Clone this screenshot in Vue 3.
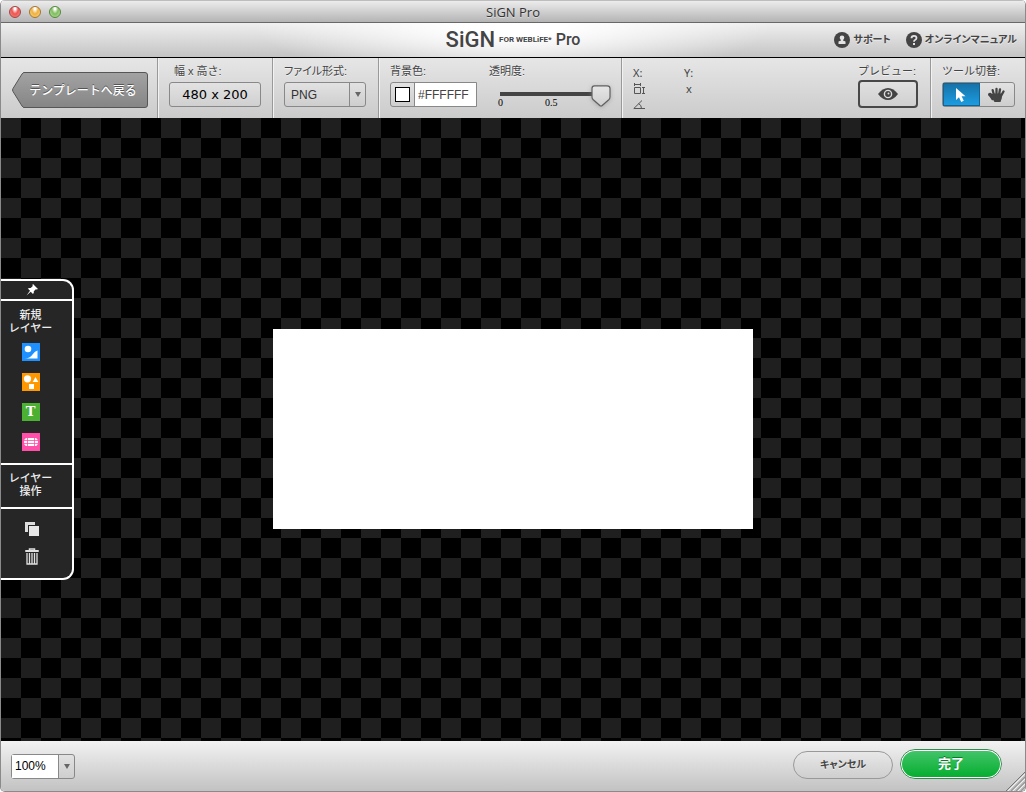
<script setup>
import { ref, computed } from 'vue'

const format = ref('PNG')
const color = ref('#FFFFFF')
const opacity = ref(1)
const zoom = ref('100%')
const tool = ref('select')
const knobLeft = computed(() => `calc(${opacity.value} * (100% - 20px))`)
</script>

<template>
  <div class="window">
    <header class="titlebar">
      <div class="lights">
        <button class="light red" aria-label="Close"></button>
        <button class="light yellow" aria-label="Minimize"></button>
        <button class="light green" aria-label="Zoom"></button>
      </div>
      <h1 class="title">SiGN Pro</h1>
    </header>

    <div class="brandbar">
      <div class="brand">
        <span class="brand-main">SiGN</span>
        <span class="brand-sub">FOR WEBLiFE*</span>
        <span class="brand-pro">Pro</span>
      </div>
      <nav class="links">
        <a href="#support">
          <svg width="16" height="16" viewBox="0 0 16 16"><circle cx="8" cy="8" r="8" fill="#444" /><circle cx="8" cy="5.800" r="2.300" fill="#e4e4e4" /><path d="M7 7h2v1.500l2.500 1V12H4.500V9.500L7 8.500z" fill="#e4e4e4" /></svg>
          <span>サポート</span>
        </a>
        <a href="#manual">
          <svg width="16" height="16" viewBox="0 0 16 16"><circle cx="8" cy="8" r="8" fill="#444" /><path d="M5.500 6.200Q5.500 3.800 8 3.800T10.500 6Q10.500 7.200 9 8Q8 8.500 8 9.800" fill="none" stroke="#e4e4e4" stroke-width="1.800" /><rect x="7" y="11" width="2" height="2" fill="#e4e4e4" /></svg>
          <span>オンラインマニュアル</span>
        </a>
      </nav>
    </div>

    <div class="toolbar">
      <section class="group group-back">
        <button class="back">
          <svg width="136" height="36" viewBox="0 0 136 36" aria-hidden="true">
            <defs>
              <linearGradient id="backFill" x1="0" y1="0" x2="0" y2="1"><stop offset="0" stop-color="#a3a3a3" /><stop offset="1" stop-color="#858585" /></linearGradient>
            </defs>
            <path d="M12 .5H133Q135.500.5 135.500 3V33Q135.500 35.500 133 35.500H12Q11 35.500 10 34L1 19.500Q0 18 1 16.500L10 2Q11 .5 12 .5Z" fill="url(#backFill)" stroke="#565656" />
          </svg>
          <span>テンプレートへ戻る</span>
        </button>
      </section>

      <section class="group">
        <span class="label indent">幅 x 高さ:</span>
        <button class="size">480 x 200</button>
      </section>

      <section class="group group-format">
        <label class="label" for="format">ファイル形式:</label>
        <div class="picker picker-format">
          <select id="format" v-model="format">
            <option>PNG</option>
            <option>JPEG</option>
            <option>GIF</option>
          </select>
          <span class="arrow"></span>
        </div>
      </section>

      <section class="group pair">
        <div>
          <label class="label" for="color">背景色:</label>
          <div class="colorfield">
            <button class="swatch" aria-label="背景色"><i></i></button>
            <input id="color" v-model="color" type="text">
          </div>
        </div>
        <div>
          <label class="label" for="opacity">透明度:</label>
          <div class="slider">
            <input id="opacity" v-model.number="opacity" type="range" min="0" max="1" step="0.01">
            <svg class="knob" :style="{ left: knobLeft }" width="20" height="22" viewBox="0 0 20 22" aria-hidden="true">
              <defs>
                <linearGradient id="knobFill" x1="0" y1="0" x2="0" y2="1"><stop offset="0" stop-color="#e6e6e6" /><stop offset="1" stop-color="#cfcfcf" /></linearGradient>
              </defs>
              <path d="M3.500 .8H16Q19 .8 19 3.500V12Q19 13.500 18 14.500L11.200 20.500Q10 21.500 8.800 20.500L2 14.500Q1 13.500 1 12V3.500Q1 .8 3.500 .8Z" fill="url(#knobFill)" stroke="#606060" stroke-width="1.200" />
            </svg>
            <div class="ticks"><span>0</span><span>0.5</span></div>
          </div>
        </div>
      </section>

      <section class="group coords">
        <span>X:</span><span>Y:</span>
        <svg width="12" height="12" viewBox="0 0 12 12" fill="none" stroke="#555"><path d="M1.500 4.500h6v6h-6zM1 1.500h7M1.500 0v3M7.500 0v3M9 4.500h3M9 10.500h3M10.500 4.500v6" /></svg>
        <span class="times">x</span>
        <svg width="12" height="10" viewBox="0 0 12 10" fill="none" stroke="#555"><path d="M9 .5L.8 8.500H12" /><path d="M5.500 3.500Q8.500 5 8.500 8.500" /></svg>
      </section>

      <section class="group group-preview">
        <span class="label">プレビュー:</span>
        <button class="preview" aria-label="プレビュー">
          <svg width="20" height="14" viewBox="0 0 20 14"><path d="M0 7Q4.500 1 10 1T20 7Q15.500 13 10 13T0 7Z" fill="#444" /><circle cx="10" cy="7" r="3.600" fill="none" stroke="#ddd" stroke-width="1.400" /><circle cx="10.500" cy="6.500" r="1" fill="#ddd" /></svg>
        </button>
      </section>

      <section class="group group-tools">
        <span class="label">ツール切替:</span>
        <div class="tools">
          <button :class="{ active: tool === 'select' }" aria-label="選択" @click="tool = 'select'">
            <svg width="12" height="16" viewBox="0 0 12 16"><path d="M1 1V13L4 10.200L6.200 15L8.800 13.800L6.600 9.200H10.500Z" fill="#fff" /></svg>
          </button>
          <button :class="{ active: tool === 'hand' }" aria-label="手のひら" @click="tool = 'hand'">
            <svg width="18" height="16" viewBox="0 0 18 16"><path d="M4.500 12Q2.800 9.500 1.200 7.800Q1 6.700 2.200 6.900L5 8.800M6.200 9L4.700 3.200M8.500 8V1.800M11 8L12 2.300M13 9L15.500 4.500" fill="none" stroke="#444" stroke-width="2.300" stroke-linecap="round" stroke-linejoin="round" /><path d="M4 7.800L5.500 6.500L14 6.500Q14.500 11 12.500 15H6.500Q5.500 13 3.500 11Z" fill="#444" /></svg>
          </button>
        </div>
      </section>
    </div>

    <main class="stage">
      <aside class="panel">
        <button class="pin" aria-label="固定">
          <svg width="12" height="12" viewBox="0 0 12 12"><path d="M7 0L12 5L10.800 5.600L9.800 5.200L7.800 7.300Q8.200 9 7 10L4.700 7.700L.5 11.500L4 6.800L1.800 4.600Q3 3.600 4.700 4L6.800 2L6.400 1.100Z" fill="#fff" /></svg>
        </button>
        <section class="new-layer">
          <h2>新規<br>レイヤー</h2>
          <button aria-label="画像">
            <svg width="18" height="18" viewBox="0 0 18 18"><rect width="18" height="18" fill="#1e90ff" /><circle cx="6" cy="6" r="3.300" fill="#fff" /><path d="M2.500 15.500Q8 15.500 10.500 11.500Q13 8 15.500 7.500V15.500Z" fill="#fff" /></svg>
          </button>
          <button aria-label="図形">
            <svg width="18" height="18" viewBox="0 0 18 18"><rect width="18" height="18" fill="#ff9800" /><circle cx="5.500" cy="5.800" r="3.600" fill="#fff" /><path d="M13.500 4L16.300 9H10.700Z" fill="#fff" /><rect x="7" y="11" width="5" height="5" fill="#fff" /></svg>
          </button>
          <button class="text-tool" aria-label="テキスト">T</button>
          <button aria-label="ボタン">
            <svg width="18" height="18" viewBox="0 0 18 18"><rect width="18" height="18" fill="#ff4fa8" /><path d="M4 5H14Q16 6 16 9T14 13H4Q2 12 2 9T4 5Z" fill="#fff" /><path d="M2 7.500H16M2 10.500H16M5.500 5V13M12.500 5V13" stroke="#ff4fa8" stroke-width=".8" /></svg>
          </button>
        </section>
        <section class="layer-title"><h2>レイヤー<br>操作</h2></section>
        <section class="layer-actions">
          <button aria-label="複製">
            <svg width="14" height="14" viewBox="0 0 14 14"><path d="M0 0H10V3H3V10H0Z" fill="#ddd" /><rect x="4" y="4" width="10" height="10" fill="#e6e6e6" /></svg>
          </button>
          <button aria-label="削除">
            <svg width="14" height="17" viewBox="0 0 14 17" fill="none" stroke="#e0e0e0"><path d="M4.500 2V1H9.500V2" stroke-width="1.500" /><path d="M1 3H13" stroke-width="2" stroke-linecap="round" /><path d="M2 5V16H12V5M4.500 5V16M7 5V16M9.500 5V16" stroke-width="1.300" /></svg>
          </button>
        </section>
      </aside>
      <div class="artboard"></div>
    </main>

    <footer class="footer">
      <div class="picker picker-zoom">
        <select v-model="zoom" aria-label="ズーム">
          <option>50%</option>
          <option>100%</option>
          <option>200%</option>
        </select>
        <span class="arrow"></span>
      </div>
      <div class="actions">
        <button class="cancel">キャンセル</button>
        <button class="done">完了</button>
      </div>
      <svg class="grip" width="19" height="19" viewBox="0 0 19 19" aria-hidden="true"><path d="M0 19L19 0V19Z" fill="#c8c8c8" /><path d="M0 19L19 0" stroke="#777" /><path d="M5 19L19 5M10 19L19 10M15 19L19 15" stroke="#969696" stroke-width="1.200" /><path d="M2 19L19 2M7 19L19 7M12 19L19 12" stroke="#f0f0f0" /></svg>
    </footer>
  </div>
</template>

<style>
body {
  background: #fff;
}
</style>

<style scoped>
.window {
  box-sizing: border-box;
  min-height: 100vh;
  display: flex;
  flex-direction: column;
  border: solid #8a8a8a;
  border-width: 0 1px 1px;
  border-radius: 5px;
  overflow: hidden;
  color: #444;
  font: 11px/16px "Liberation Sans", "Noto Sans CJK JP", sans-serif;
}
.window *,
.window *::before {
  box-sizing: border-box;
}
button {
  padding: 0;
  border: 0;
  background: none;
  color: inherit;
  font: inherit;
}
svg {
  display: block;
}
.titlebar {
  display: grid;
  grid-template-columns: 1fr auto 1fr;
  align-items: center;
  height: 23px;
  border-top: 1px solid #bdbdbd;
  border-bottom: 1px solid #686868;
  background: linear-gradient(#ececec, #b4b4b4);
}
.lights {
  display: flex;
  gap: 8px;
  padding-left: 8px;
}
.light {
  width: 12px;
  height: 12px;
  border: 1px solid;
  border-radius: 50%;
}
.red {
  border-color: #a04444;
  background: radial-gradient(ellipse at 50% 15%, #fff 0 10%, #ee5550 45%, #f9908c);
}
.yellow {
  border-color: #a47430;
  background: radial-gradient(ellipse at 50% 15%, #fff 0 10%, #f0b040 45%, #fbe08a);
}
.green {
  border-color: #55853c;
  background: radial-gradient(ellipse at 50% 15%, #fff 0 10%, #80bd60 45%, #c4eca4);
}
.title {
  margin: 0;
  color: #333;
  font: 13px/20px "Open Sans", sans-serif;
  text-shadow: 0 1px #ddd;
}
.brandbar {
  display: grid;
  grid-template-columns: 1fr auto 1fr;
  align-items: center;
  height: 35px;
  border-bottom: 1px solid #000;
  background:
    radial-gradient(ellipse 260px 60px at 50% 0, #fff 20%, rgba(255, 255, 255, 0)),
    linear-gradient(#efefef, #c4c4c4);
}
.brand {
  display: flex;
  grid-column: 2;
  align-items: center;
  gap: 4px;
  font-family: Roboto, sans-serif;
  line-height: 24px;
}
.brand-main {
  font-size: 22px;
  font-weight: 500;
}
.brand-sub {
  font-size: 8px;
  font-weight: 700;
}
.brand-pro {
  font-size: 16px;
  font-weight: 500;
}
.links {
  display: flex;
  justify-content: flex-end;
  gap: 15px;
  padding-right: 8px;
  font-size: 10px;
  font-weight: 700;
  font-feature-settings: "palt";
}
.links a {
  display: flex;
  align-items: center;
  gap: 3px;
  color: #444;
  text-decoration: none;
  text-shadow: 0 1px #eee;
}
.toolbar {
  display: flex;
  height: 60px;
  background: linear-gradient(#e6e6e6, #cbcbcb);
}
.group {
  padding: 5px 11px 0;
  border-right: 1px solid #999;
  box-shadow: 1px 0 #f2f2f2;
}
.label {
  display: block;
  margin-bottom: 3px;
  line-height: 16px;
  white-space: nowrap;
  text-shadow: 0 1px #f2f2f2;
}
.indent {
  padding-left: 5px;
}
.group-back {
  padding: 14px 9px 0 11px;
}
.back {
  display: grid;
  place-items: center;
  color: #fff;
  font-size: 12px;
  font-weight: 500;
  text-shadow: 0 -1px #555;
}
.back > * {
  grid-area: 1 / 1;
}
.back span {
  padding-top: 2px;
  padding-left: 6px;
}
.size {
  width: 92px;
  height: 25px;
  border: 1px solid #888;
  border-radius: 3px;
  background: linear-gradient(#e2e2e2, #d0d0d0);
  color: #000;
  font: 13px/23px "DejaVu Sans", sans-serif;
}
.group-format {
  padding-right: 12px;
}
.group-format .label {
  font-feature-settings: "palt";
}
.picker {
  position: relative;
  height: 25px;
  border: 1px solid #888;
  border-radius: 3px;
  background: linear-gradient(#e2e2e2, #cecece);
}
.picker select {
  width: 100%;
  height: 100%;
  padding: 0 6px;
  appearance: none;
  border: 0;
  background: none;
  color: #333;
  font: 12px "Liberation Sans", sans-serif;
}
.arrow {
  position: absolute;
  top: 0;
  right: 0;
  display: grid;
  place-items: center;
  width: 16px;
  height: 100%;
  border-left: 1px solid #888;
  pointer-events: none;
}
.arrow::before {
  content: "";
  border: solid transparent;
  border-width: 5px 3px 0;
  border-top-color: #666;
}
.picker-format {
  width: 82px;
}
.pair {
  display: flex;
  gap: 12px;
  padding-right: 10px;
}
.colorfield {
  display: flex;
  width: 87px;
  height: 25px;
  border: 1px solid #888;
  border-radius: 3px 0 0 3px;
  background: linear-gradient(#e2e2e2, #cecece);
}
.swatch {
  display: grid;
  place-items: center;
  width: 24px;
  border-right: 1px solid #888;
}
.swatch i {
  width: 15px;
  height: 15px;
  border: 1px solid #000;
  background: #fff;
}
.colorfield input {
  flex: 1;
  min-width: 0;
  padding: 0 3px;
  border: 0;
  background: #fff;
  color: #444;
  font: 12px "Liberation Sans", sans-serif;
}
.slider {
  position: relative;
  display: grid;
  grid-template-rows: 8px 10px;
  width: 113px;
  margin-left: 9px;
  padding-top: 8px;
}
.slider input {
  width: 100px;
  height: 8px;
  margin: 0 0 0 2px;
  appearance: none;
  background: linear-gradient(#444, #444) center / 100% 4px no-repeat;
}
.slider input::-webkit-slider-thumb {
  width: 20px;
  height: 8px;
  appearance: none;
  background: transparent;
}
.knob {
  position: absolute;
  top: 3px;
  filter: drop-shadow(0 1px 2px #8888);
}
.ticks {
  display: flex;
  gap: 42px;
  color: #000;
  font: 10px/10px "Liberation Serif", serif;
}
.coords {
  display: grid;
  flex: 1;
  grid-template-columns: 51px auto;
  grid-template-rows: repeat(3, 16px);
  align-content: start;
  align-items: center;
  justify-content: start;
  padding-top: 7px;
  border: 0;
  box-shadow: none;
  font-family: "Noto Sans", sans-serif;
}
.times {
  padding-left: 2px;
}
.group-preview {
  padding-left: 0;
  padding-right: 12px;
}
.group-preview .label {
  margin-bottom: 1px;
}
.preview {
  display: grid;
  place-items: center;
  width: 60px;
  height: 28px;
  border: 2px solid #484848;
  border-radius: 4px;
  background: linear-gradient(#e0e0e0, #d0d0d0);
}
.group-tools {
  padding-right: 10px;
  border: 0;
  box-shadow: none;
}
.tools {
  display: flex;
  width: 73px;
  height: 25px;
  border: 1px solid #888;
  border-radius: 3px;
  background: linear-gradient(#e2e2e2, #cecece);
}
.tools button {
  display: grid;
  flex: 1;
  place-items: center;
}
.tools .active {
  border: 1px solid #126495;
  background: linear-gradient(#1672a8, #1c9ce0);
}
.stage {
  display: grid;
  flex: 1;
  place-items: center;
  padding-bottom: 1px;
  background: repeating-conic-gradient(#000 0 25%, #1f1f1f 0 50%) 0 0 / 40px 40px;
}
.stage > * {
  grid-area: 1 / 1;
}
.artboard {
  width: 480px;
  height: 200px;
  background: #fff;
}
.panel {
  z-index: 1;
  justify-self: start;
  width: 73px;
  border: 2px solid #fff;
  border-left: 0;
  border-radius: 0 11px 11px 0;
  background: #262626;
  color: #eee;
}
.panel h2 {
  margin: 0;
  font-size: 11px;
  font-weight: 500;
  line-height: 13px;
  text-align: center;
}
.panel section {
  display: flex;
  flex-direction: column;
  align-items: center;
  padding-right: 12px;
  border-top: 2px solid #fff;
}
.pin {
  display: grid;
  place-items: center;
  width: 100%;
  height: 18px;
  padding-right: 9px;
}
.panel .new-layer {
  gap: 12px;
  padding-top: 8px;
  padding-bottom: 12px;
}
.new-layer h2 {
  margin-bottom: -4px;
}
.text-tool {
  width: 18px;
  height: 18px;
  background: #4cb032;
  color: #fff;
  font: bold 13px/18px "DejaVu Serif", serif;
}
.panel .layer-title {
  padding-top: 7px;
  padding-bottom: 9px;
}
.panel .layer-actions {
  gap: 12px;
  padding-top: 13px;
  padding-bottom: 13px;
  padding-right: 9px;
}
.footer {
  position: relative;
  display: flex;
  align-items: center;
  justify-content: space-between;
  height: 50px;
  padding: 0 23px 0 10px;
  background: linear-gradient(#f2f2f2, #c2c2c2);
}
.picker-zoom {
  width: 64px;
}
.picker-zoom select {
  width: 47px;
  padding: 0 3px;
  background: #fff;
  color: #000;
}
.actions {
  display: flex;
  align-items: flex-end;
  gap: 7px;
  padding-bottom: 4px;
}
.cancel {
  width: 100px;
  height: 28px;
  border: 1px solid #999;
  border-radius: 14px;
  font-size: 10px;
  font-weight: 700;
  font-feature-settings: "palt";
  text-shadow: 0 1px #eee;
}
.done {
  width: 102px;
  height: 30px;
  border: 2px solid #fff;
  border-radius: 15px;
  outline: 1px solid #3a8752;
  outline-offset: -1px;
  background: linear-gradient(#42c469, #06ae30);
  color: #fff;
  font-size: 13px;
  font-weight: 700;
  text-shadow: 0 -1px #0a7a2a;
}
.grip {
  position: absolute;
  right: 0;
  bottom: 0;
}
</style>
